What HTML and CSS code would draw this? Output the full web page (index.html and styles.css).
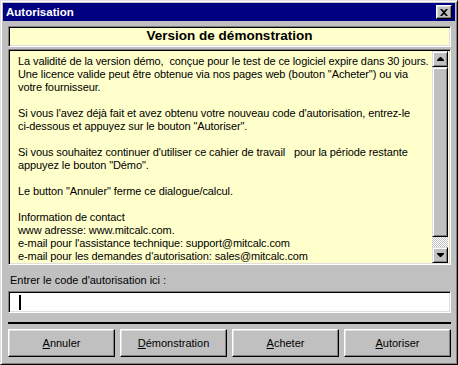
FILE: index.html
```html
<!DOCTYPE html>
<html lang="fr">
<head>
    <meta charset="UTF-8">
    <title>Autorisation</title>
    <link rel="stylesheet" href="styles.css">
</head>
<body>

    <div class="window">
        <div class="titlebar">
            <span class="title">Autorisation</span>
            <button class="close" aria-label="Fermer">
                <svg width="8" height="7" viewBox="0 0 8 7"><path d="M0 0h2l2 2 2-2h2L5 3.5 8 7H6L4 5 2 7H0l3-3.5z" fill="#000"/></svg>
            </button>
        </div>

        <div class="content">
            <!-- Header -->
            <div class="banner">Version de démonstration</div>

            <!-- Message with scrollbar -->
            <div class="info">
                <div class="info-text">
                    <p>La validité de la version démo,&nbsp; conçue pour le test de ce logiciel expire dans 30 jours.<br>
                    Une licence valide peut être obtenue via nos pages web (bouton "Acheter") ou via<br>
                    votre fournisseur.</p>
                    <p>Si vous l'avez déjà fait et avez obtenu votre nouveau code d'autorisation, entrez-le<br>
                    ci-dessous et appuyez sur le bouton "Autoriser".</p>
                    <p>Si vous souhaitez continuer d'utiliser ce cahier de travail&nbsp;&nbsp; pour la période restante<br>
                    appuyez le bouton "Démo".</p>
                    <p>Le button "Annuler" ferme ce dialogue/calcul.</p>
                    <p>Information de contact<br>
                    www adresse: www.mitcalc.com.<br>
                    e-mail pour l'assistance technique: support@mitcalc.com<br>
                    e-mail pour les demandes d'autorisation: sales@mitcalc.com</p>
                </div>
                <div class="scrollbar">
                    <div class="arrow">
                        <svg width="7" height="4" viewBox="0 0 7 4"><path d="M3 0h1l3 3v1H0V3z" fill="#000"/></svg>
                    </div>
                    <div class="thumb"></div>
                    <div class="track"></div>
                    <div class="arrow">
                        <svg width="7" height="4" viewBox="0 0 7 4"><path d="M0 0h7v1L4 4H3L0 1z" fill="#000"/></svg>
                    </div>
                </div>
            </div>

            <!-- Code entry -->
            <label class="code-label" for="code">Entrer le code d'autorisation ici :</label>
            <div class="code-field" id="code"><span class="caret"></span></div>

            <div class="separator"></div>

            <div class="actions">
                <button class="btn"><u>A</u>nnuler</button>
                <button class="btn"><u>D</u>émonstration</button>
                <button class="btn"><u>A</u>cheter</button>
                <button class="btn"><u>A</u>utoriser</button>
            </div>
        </div>
    </div>

</body>
</html>
```

FILE: styles.css
```css
body {
    margin: 0;
    background: #c0c0c0;
    font-family: "Liberation Sans", Arial, sans-serif;
    font-size: 11px;
    color: #000;
}

.window {
    width: 458px;
    height: 365px;
    box-sizing: border-box;
    background: #c0c0c0;
    border: 1px solid;
    border-color: #dfdfdf #000 #000 #dfdfdf;
    box-shadow: inset 1px 1px #fff, inset -1px -1px #808080;
    padding: 2px;
    display: flex;
    flex-direction: column;
}

.titlebar {
    height: 18px;
    flex: none;
    background: #000080;
    color: #fff;
    display: flex;
    align-items: center;
    justify-content: space-between;
    padding: 0 3px 0 3px;
}

.title {
    font-weight: bold;
    font-size: 11.5px;
}

.close {
    width: 16px;
    height: 14px;
    padding: 0;
    background: #c0c0c0;
    border: 1px solid;
    border-color: #fff #000 #000 #fff;
    box-shadow: inset -1px -1px #808080, inset 1px 1px #dfdfdf;
    display: flex;
    align-items: center;
    justify-content: center;
}

.content {
    flex: 1;
    display: flex;
    flex-direction: column;
    padding: 5px 4px 5px 5px;
}

.banner {
    height: 21px;
    box-sizing: border-box;
    background: #ffffcc;
    border: 1px solid;
    border-color: #808080 #fff #fff #808080;
    box-shadow: inset 1px 1px #000, inset -1px -1px #dfdfdf;
    text-align: center;
    font-weight: bold;
    font-size: 13.5px;
    line-height: 18px;
}

.info {
    margin-top: 2px;
    height: 216px;
    box-sizing: border-box;
    display: flex;
    background: #ffffcc;
    border: 1px solid;
    border-color: #808080 #fff #fff #808080;
    box-shadow: inset 1px 1px #000, inset -1px -1px #dfdfdf;
    padding: 1px 2px 1px 1px;
}

.info-text {
    flex: 1;
    padding: 4px 2px 4px 8px;
    line-height: 13px;
    letter-spacing: -0.1px;
    white-space: nowrap;
    overflow: hidden;
}

.info-text p {
    margin: 0 0 13px;
}

.scrollbar {
    width: 16px;
    display: flex;
    flex-direction: column;
}

.arrow,
.thumb {
    box-sizing: border-box;
    background: #c0c0c0;
    border: 1px solid;
    border-color: #dfdfdf #000 #000 #dfdfdf;
    box-shadow: inset 1px 1px #fff, inset -1px -1px #808080;
}

.arrow {
    height: 16px;
    display: flex;
    align-items: center;
    justify-content: center;
}

.thumb {
    height: 170px;
}

.track {
    flex: 1;
    background: repeating-conic-gradient(#c0c0c0 0 25%, #fff 0 50%) 0 0 / 2px 2px;
}

.code-label {
    margin-top: 9px;
    padding-left: 2px;
    line-height: 13px;
}

.code-field {
    margin-top: 4px;
    height: 22px;
    box-sizing: border-box;
    background: #fff;
    border: 1px solid;
    border-color: #808080 #fff #fff #808080;
    box-shadow: inset 1px 1px #000, inset -1px -1px #dfdfdf;
    padding: 3px 0 0 10px;
}

.caret {
    display: block;
    width: 2px;
    height: 15px;
    background: #000;
}

.separator {
    margin-top: 9px;
    height: 2px;
    background: #000;
}

.actions {
    margin-top: 5px;
    display: grid;
    grid-template-columns: repeat(4, 1fr);
    gap: 5px;
}

.btn {
    height: 28px;
    padding: 0;
    font-family: "Liberation Sans", Arial, sans-serif;
    font-size: 11px;
    color: #000;
    background: #c0c0c0;
    border: 1px solid;
    border-color: #fff #000 #000 #fff;
    box-shadow: inset -1px -1px #808080, inset 1px 1px #dfdfdf;
}
```
